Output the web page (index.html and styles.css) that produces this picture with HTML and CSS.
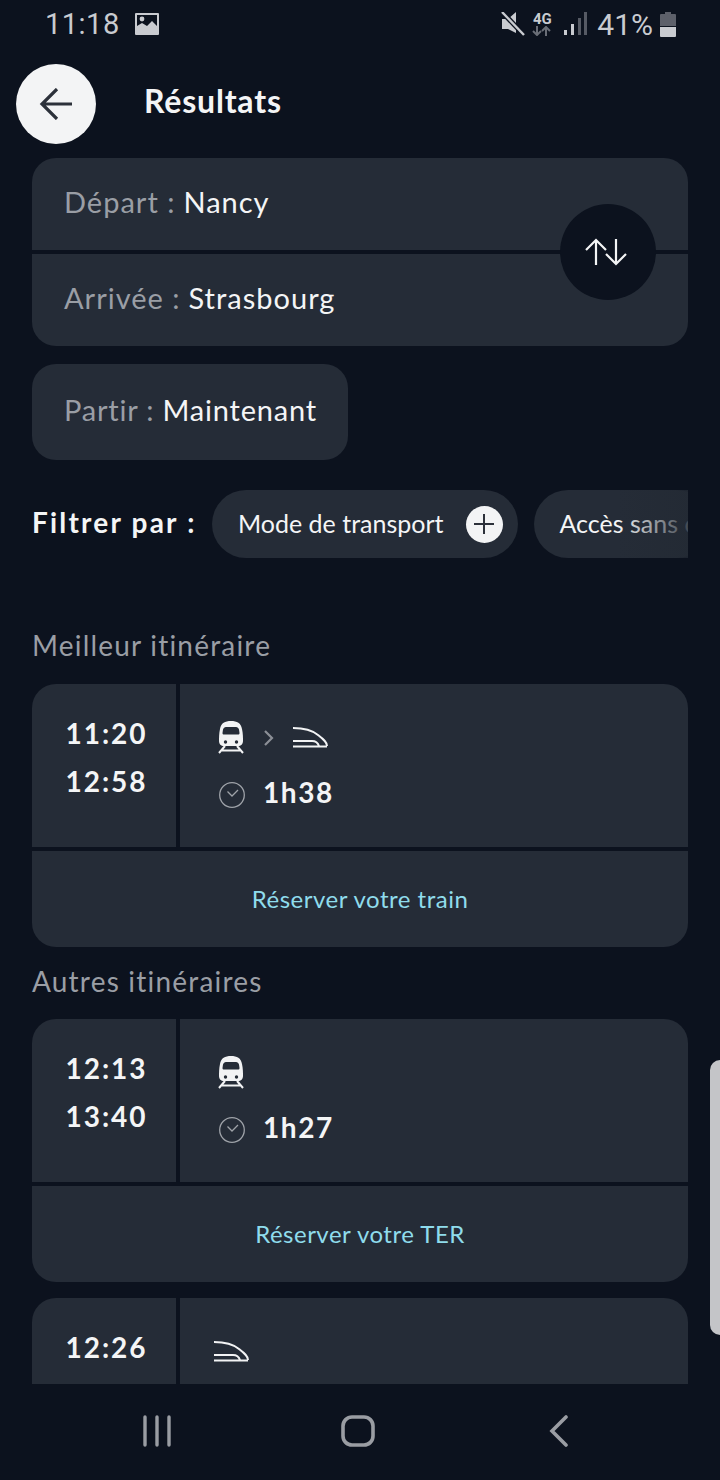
FILE: index.html
```html
<!DOCTYPE html>
<html lang="fr">
<head>
    <meta charset="UTF-8">
    <meta name="viewport" content="width=device-width, initial-scale=1.0">
    <title>Résultats</title>
    <link rel="stylesheet" href="styles.css">
</head>
<body>
    <div class="screen">
        <!-- Status bar -->
        <div class="status-bar">
            <div class="status-left">
                <span class="clock">11:18</span>
                <svg width="24" height="22" viewBox="0 0 24 22"><path fill="#c9cbd0" fill-rule="evenodd" d="M1 0h22a1 1 0 0 1 1 1v20a1 1 0 0 1-1 1H1a1 1 0 0 1-1-1V1a1 1 0 0 1 1-1zM2 2v11l5-3 5 3 5-5 5 5V2z"/><circle cx="7" cy="6" r="2.4" fill="#c9cbd0"/></svg>
            </div>
            <div class="status-right">
                <svg class="mute" width="24" height="24" viewBox="0 0 24 24"><path fill="#c9cbd0" d="M1 7h6l8-7v21L7 17H1z"/><path d="M2 1l21 22" stroke="#0c121e" stroke-width="5"/><path d="M1 0l22 23" stroke="#c9cbd0" stroke-width="2.4"/></svg>
                <div class="net">
                    <span class="net-label">4G</span>
                    <svg width="20" height="10" viewBox="0 0 20 10"><path d="M5 0v9M1 5l4 4 4-4" fill="none" stroke="#6a6e77" stroke-width="2"/><path d="M14 10V1M10 5l4-4 4 4" fill="none" stroke="#6a6e77" stroke-width="2"/></svg>
                </div>
                <svg class="signal" width="24" height="24" viewBox="0 0 24 24"><rect x="0" y="18" width="3" height="5" fill="#c9cbd0"/><rect x="7" y="12" width="3" height="11" fill="#c9cbd0"/><rect x="14" y="6" width="3" height="17" fill="#565a64"/><rect x="20" y="0" width="3" height="23" fill="#565a64"/></svg>
                <span class="battery-pct">41%</span>
                <svg width="16" height="25" viewBox="0 0 16 25"><path fill="#5d606a" d="M5 0h6v2h4a1 1 0 0 1 1 1v11H0V3a1 1 0 0 1 1-1h4z"/><path fill="#c9cbd0" d="M0 15h16v9a1 1 0 0 1-1 1H1a1 1 0 0 1-1-1z"/></svg>
            </div>
        </div>

        <div class="content">
            <div class="header">
                <div class="back-btn">
                    <svg width="34" height="32" viewBox="0 0 34 32"><path d="M33 16H3M18 1L3 16l15 15" fill="none" stroke="#2c313a" stroke-width="3.2"/></svg>
                </div>
                <h1 class="title">Résultats</h1>
            </div>

            <!-- Search summary -->
            <div class="route-card">
                <div class="route-row"><span class="muted">Départ :</span> Nancy</div>
                <div class="route-row"><span class="muted">Arrivée :</span> Strasbourg</div>
                <div class="swap-btn">
                    <svg width="42" height="28" viewBox="0 0 42 28"><path d="M11 27V2M1 12l10-10 10 10" fill="none" stroke="#f3f4f5" stroke-width="2.2"/><path d="M31 1v25M21 16l10 10 10-10" fill="none" stroke="#f3f4f5" stroke-width="2.2"/></svg>
                </div>
            </div>

            <div class="when-pill"><span class="muted">Partir :</span>&nbsp;Maintenant</div>

            <div class="filters">
                <span class="filters-label">Filtrer par :</span>
                <div class="chips">
                    <div class="chip">
                        Mode de transport
                        <span class="chip-plus">
                            <svg width="20" height="20" viewBox="0 0 20 20"><path d="M10 0v20M0 10h20" stroke="#2c313a" stroke-width="2"/></svg>
                        </span>
                    </div>
                    <div class="chip">Accès sans c</div>
                    <div class="chips-fade"></div>
                </div>
            </div>

            <h2 class="section-title first">Meilleur itinéraire</h2>
            <div class="trip-card">
                <div class="trip-top">
                    <div class="trip-times"><span>11:20</span><span>12:58</span></div>
                    <div class="trip-info">
                        <div class="modes">
                            <svg width="28" height="34" viewBox="0 0 28 34"><use href="#icon-ter"/></svg>
                            <svg width="12" height="16" viewBox="0 0 12 16"><path d="M2 1l7 7-7 7" fill="none" stroke="#8b8f96" stroke-width="2.2"/></svg>
                            <svg width="38" height="22" viewBox="0 0 38 22"><use href="#icon-tgv"/></svg>
                        </div>
                        <div class="duration">
                            <svg class="duration-icon" width="26" height="26" viewBox="0 0 26 26"><use href="#icon-clock"/></svg>
                            <span>1h38</span>
                        </div>
                    </div>
                </div>
                <div class="trip-action">Réserver votre train</div>
            </div>

            <h2 class="section-title">Autres itinéraires</h2>
            <div class="trip-card">
                <div class="trip-top">
                    <div class="trip-times"><span>12:13</span><span>13:40</span></div>
                    <div class="trip-info">
                        <div class="modes">
                            <svg width="28" height="34" viewBox="0 0 28 34"><use href="#icon-ter"/></svg>
                        </div>
                        <div class="duration">
                            <svg class="duration-icon" width="26" height="26" viewBox="0 0 26 26"><use href="#icon-clock"/></svg>
                            <span>1h27</span>
                        </div>
                    </div>
                </div>
                <div class="trip-action">Réserver votre TER</div>
            </div>

            <div class="trip-card next">
                <div class="trip-top">
                    <div class="trip-times"><span>12:26</span></div>
                    <div class="trip-info">
                        <div class="modes">
                            <svg class="tgv-alone" width="38" height="22" viewBox="0 0 38 22"><use href="#icon-tgv"/></svg>
                        </div>
                    </div>
                </div>
            </div>
        </div>

        <div class="scrollbar"></div>

        <!-- Android nav bar -->
        <div class="nav-bar">
            <svg width="30" height="32" viewBox="0 0 30 32"><path d="M3 2v28M15 2v28M27 2v28" stroke="#9a9da3" stroke-width="3.4" stroke-linecap="round"/></svg>
            <svg class="nav-home" width="34" height="32" viewBox="0 0 34 32"><rect x="2" y="2" width="30" height="28" rx="9" fill="none" stroke="#9a9da3" stroke-width="3.6"/></svg>
            <svg width="22" height="32" viewBox="0 0 22 32"><path d="M18 2L4 16l14 14" fill="none" stroke="#9a9da3" stroke-width="3.6" stroke-linecap="round"/></svg>
        </div>
    </div>

    <!-- Shared icons -->
    <svg class="icon-defs" width="0" height="0">
        <defs>
            <g id="icon-ter">
                <path fill="#f2f3f4" fill-rule="evenodd" d="M13 0c6 0 10 2 11 8 1 4 1 9 1 12 0 3-2 5-5 5H6c-3 0-5-2-5-5 0-3 0-8 1-12C3 2 7 0 13 0zM8 6C6.500 6 5.500 7 5 8.500L4.500 12c0 1 .5 1.500 1.500 1.500h14c1 0 1.500-.5 1.500-1.500L21 8.500C20.500 7 19.500 6 18 6z"/>
                <circle cx="7.500" cy="21" r="1.700" fill="#252c37"/>
                <circle cx="18.500" cy="21" r="1.700" fill="#252c37"/>
                <path d="M7 25l-6 7M19 25l6 7M4 29.500h18" fill="none" stroke="#f2f3f4" stroke-width="2"/>
            </g>
            <g id="icon-tgv" fill="none" stroke="#f2f3f4" stroke-width="2">
                <path d="M1 1C12 1 20 3 26 8c5 4 9 7 9 11"/>
                <path d="M1 19.500h34M1 14h19c4 0 6 2 7 5"/>
            </g>
            <g id="icon-clock" fill="none" stroke="#9fa3a9" stroke-width="1.300">
                <circle cx="13" cy="13" r="12.300"/>
                <path d="M8.500 9.500l4.500 4.500 6-6"/>
            </g>
        </defs>
    </svg>
</body>
</html>
```

FILE: styles.css
```css
* {
    box-sizing: border-box;
}

body {
    margin: 0;
    background-color: #0c121e;
    color: #f4f5f6;
    font-family: "Lato", "Open Sans", sans-serif;
}

.screen {
    position: relative;
    width: 720px;
    height: 1480px;
    overflow: hidden;
    display: flex;
    flex-direction: column;
}

.icon-defs {
    position: absolute;
}

/* Status bar */
.status-bar {
    height: 48px;
    flex-shrink: 0;
    padding: 0 44px 0 45px;
    display: flex;
    justify-content: space-between;
    align-items: center;
    color: #c9cbd0;
}

.status-left,
.status-right {
    display: flex;
    align-items: center;
}

.clock {
    font-family: "Roboto", sans-serif;
    font-size: 29px;
    letter-spacing: 0.5px;
    margin-right: 15px;
}

.mute {
    margin-right: 7px;
}

.net {
    width: 20px;
    margin-right: 12px;
    display: flex;
    flex-direction: column;
    align-items: center;
}

.net-label {
    font-family: "Roboto", sans-serif;
    font-size: 15px;
    font-weight: 700;
    line-height: 12px;
}

.net svg {
    margin-top: 1px;
}

.signal {
    margin-right: 9px;
}

.battery-pct {
    font-family: "Roboto", sans-serif;
    font-size: 30px;
    margin-right: 7px;
}

/* Scrolling content */
.content {
    height: 1336px;
    flex-shrink: 0;
    overflow: hidden;
    padding: 0 32px;
}

.header {
    height: 110px;
    display: flex;
    align-items: center;
    margin-left: -16px;
    padding-top: 2px;
}

.back-btn {
    width: 80px;
    height: 80px;
    border-radius: 50%;
    background-color: #f3f4f5;
    display: flex;
    align-items: center;
    justify-content: center;
}

.title {
    margin: 0 0 8px 48px;
    font-size: 32px;
    font-weight: 700;
    letter-spacing: 0.8px;
}

.muted {
    color: #9a9ea5;
}

/* Route summary */
.route-card {
    position: relative;
    display: flex;
    flex-direction: column;
    gap: 4px;
    border-radius: 24px;
    overflow: hidden;
}

.route-row {
    height: 92px;
    padding-left: 32px;
    padding-bottom: 6px;
    background-color: #252c37;
    display: flex;
    align-items: center;
    gap: 8px;
    font-size: 29px;
    letter-spacing: 1px;
}

.swap-btn {
    position: absolute;
    top: 46px;
    right: 32px;
    width: 96px;
    height: 96px;
    padding-right: 5px;
    border-radius: 50%;
    background-color: #0c121e;
    display: flex;
    align-items: center;
    justify-content: center;
}

.when-pill {
    width: 316px;
    height: 96px;
    margin-top: 18px;
    padding-left: 32px;
    padding-bottom: 6px;
    border-radius: 24px;
    background-color: #252c37;
    display: flex;
    align-items: center;
    font-size: 29px;
    letter-spacing: 0.8px;
}

/* Filters */
.filters {
    margin-top: 30px;
    display: flex;
    align-items: center;
}

.filters-label {
    width: 180px;
    flex-shrink: 0;
    padding-bottom: 4px;
    font-size: 28px;
    font-weight: 700;
    letter-spacing: 2.2px;
    white-space: nowrap;
}

.chips {
    position: relative;
    flex: 1;
    display: flex;
    gap: 16px;
    overflow: hidden;
}

.chip {
    height: 68px;
    flex-shrink: 0;
    padding: 0 15px 2px 26px;
    border-radius: 34px;
    background-color: #252c37;
    display: flex;
    align-items: center;
    font-size: 25px;
    white-space: nowrap;
}

.chip-plus {
    width: 37px;
    height: 37px;
    margin: 2px 0 0 22px;
    border-radius: 50%;
    background-color: #f3f4f5;
    display: flex;
    align-items: center;
    justify-content: center;
}

.chips-fade {
    position: absolute;
    top: 0;
    right: 0;
    width: 70px;
    height: 68px;
    background: linear-gradient(to right, rgba(35, 42, 52, 0), rgba(35, 42, 52, 0.85));
}

/* Trips */
.section-title {
    margin: 17px 0 0;
    height: 55px;
    font-size: 28px;
    font-weight: 400;
    line-height: 34px;
    letter-spacing: 1.2px;
    color: #9a9ea5;
}

.section-title.first {
    margin-top: 70px;
    height: 56px;
}

.trip-card {
    display: flex;
    flex-direction: column;
    gap: 4px;
    border-radius: 24px;
    overflow: hidden;
}

.trip-card.next {
    margin-top: 16px;
}

.trip-top {
    height: 163px;
    display: flex;
    gap: 4px;
}

.trip-times {
    width: 144px;
    padding: 32px 0 0 5px;
    background-color: #252c37;
    display: flex;
    flex-direction: column;
    align-items: center;
    gap: 14px;
    font-size: 28px;
    line-height: 34px;
    font-weight: 700;
    letter-spacing: 2px;
}

.trip-info {
    flex: 1;
    padding: 36px 0 0 38px;
    background-color: #252c37;
}

.modes {
    height: 36px;
    display: flex;
    align-items: center;
    gap: 17px;
}

.tgv-alone {
    margin-left: -5px;
}

.duration {
    margin-top: 19px;
    display: flex;
    align-items: center;
    gap: 18px;
    font-size: 28px;
    font-weight: 700;
    letter-spacing: 1.6px;
}

.duration-icon {
    margin: 6px 0 0 1px;
}

.trip-action {
    height: 96px;
    padding-bottom: 2px;
    background-color: #252c37;
    display: flex;
    align-items: center;
    justify-content: center;
    font-size: 24px;
    letter-spacing: 0.5px;
    color: #8fdcec;
}

/* Overlay scrollbar */
.scrollbar {
    position: absolute;
    top: 1060px;
    right: 0;
    width: 10px;
    height: 275px;
    background-color: #c4c5c8;
    border-radius: 10px 0 0 10px;
}

/* Nav bar */
.nav-bar {
    height: 96px;
    flex-shrink: 0;
    padding: 0 0 2px 142px;
    display: flex;
    align-items: center;
}

.nav-home {
    margin: 0 173px 0 169px;
}
```
